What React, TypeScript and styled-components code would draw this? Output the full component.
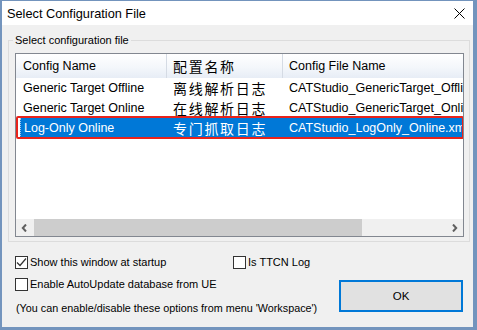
import styled, { createGlobalStyle } from 'styled-components';

const COLORS = {
  frame: '#7394bd',
  face: '#f0f0f0',
  groupLine: '#dcdcdc',
  listBorder: '#828790',
  headerLine: '#d5dbe4',
  select: '#0078d7',
  mark: '#e8231b',
  arrow: '#606060',
  thumb: '#cdcdcd',
};

const FONT = {
  ui: `'Liberation Sans', Arial, sans-serif`,
  cjk: `'Noto Sans CJK SC', sans-serif`,
};

type Config = { name: string; label: string; file: string; selected?: boolean };

const CONFIGS: Config[] = [
  { name: 'Generic Target Offline', label: '离线解析日志', file: 'CATStudio_GenericTarget_Offline.xml' },
  { name: 'Generic Target Online', label: '在线解析日志', file: 'CATStudio_GenericTarget_Online.xml' },
  { name: 'Log-Only Online', label: '专门抓取日志', file: 'CATStudio_LogOnly_Online.xml', selected: true },
];

// widths of the three list columns (row cells start after a 4px indent)
const COLS = [147, 116, 260];

const GlobalStyle = createGlobalStyle`
  html, body { margin: 0; padding: 0; background: ${COLORS.face}; }
  * { box-sizing: border-box; }
`;

const CheckMark = () => (
  <svg width='11' height='11' viewBox='0 0 11 11'>
    <polyline points='1,5.5 4,8.5 10,1.5' fill='none' stroke='#333' strokeWidth='1.2' />
  </svg>
);

const Chevron = ({ dir }: { dir: 'left' | 'right' }) => (
  <svg width='7' height='8' viewBox='0 0 7 8'>
    <polyline
      points={dir === 'left' ? '5,0.5 1.8,4 5,7.5' : '2,0.5 5.2,4 2,7.5'}
      fill='none'
      stroke={COLORS.arrow}
      strokeWidth='2'
    />
  </svg>
);

const CheckOption = ({ label, checked, area }: { label: string; checked?: boolean; area: string }) => (
  <Option $area={area}>
    <Box>{checked && <CheckMark />}</Box>
    {label}
  </Option>
);

const App = () => {
  return (
    <>
      <GlobalStyle />
      <Window>
        <TitleBar>
          <Title>Select Configuration File</Title>
          <svg width='11' height='11' viewBox='0 0 11 11'>
            <path d='M0.5 0.5 L10.5 10.5 M10.5 0.5 L0.5 10.5' stroke='#000' strokeWidth='1' />
          </svg>
        </TitleBar>
        <Group>
          <Legend>Select configuration file</Legend>
          <ListBox>
            <Viewport>
              <HeaderRow>
                <HeaderCell $w={151} $pad={7}>Config Name</HeaderCell>
                <HeaderCell $w={116} $pad={6} $cjk>
                  配置名称
                </HeaderCell>
                <HeaderCell $w={COLS[2]} $pad={6} $last>
                  Config File Name
                </HeaderCell>
              </HeaderRow>
              {CONFIGS.map((c) => (
                <Row key={c.name} $selected={!!c.selected}>
                  <Cell $w={COLS[0]} $pad={3} $selected={!!c.selected} $focus={!!c.selected}>
                    {c.name}
                  </Cell>
                  <Cell $w={COLS[1]} $pad={6} $selected={!!c.selected} $cjk>
                    {c.label}
                  </Cell>
                  <Cell $w={COLS[2]} $pad={6} $selected={!!c.selected}>
                    {c.file}
                  </Cell>
                </Row>
              ))}
            </Viewport>
            <HScroll>
              <ArrowButton>
                <Chevron dir='left' />
              </ArrowButton>
              <Track>
                <Thumb style={{ width: `${(447 / 560) * 100}%` }} />
              </Track>
              <ArrowButton>
                <Chevron dir='right' />
              </ArrowButton>
            </HScroll>
          </ListBox>
        </Group>
        <Footer>
          <CheckOption area='1 / 1 / 2 / 2' label='Show this window at startup' checked />
          <CheckOption area='1 / 2 / 2 / 4' label='Is TTCN Log' />
          <CheckOption area='2 / 1 / 3 / 3' label='Enable AutoUpdate database from UE' />
          <Note>(You can enable/disable these options from menu &apos;Workspace&apos;)</Note>
          <OkButton type='button'>OK</OkButton>
        </Footer>
      </Window>
    </>
  );
};

export default App;

const Window = styled.div`
  display: flex;
  flex-direction: column;
  width: 477px;
  height: 330px;
  border: solid ${COLORS.frame};
  border-width: 1px 4px 3px 2px;
  background: ${COLORS.face};
  font-family: ${FONT.ui};
  color: #000;
`;

const TitleBar = styled.div`
  display: flex;
  align-items: center;
  justify-content: space-between;
  height: 24px;
  padding: 0 8px 0 5px;
  background: #fff;
`;

const Title = styled.span`
  font-size: 12.75px;
`;

const Group = styled.fieldset`
  margin: 8px 3px 0 6px;
  padding: 6px 5px 4px 6px;
  min-width: 0;
  border: 1px solid ${COLORS.groupLine};
`;

const Legend = styled.legend`
  margin-left: -2px;
  padding: 0 2px;
  font-size: 11px;
  line-height: 14px;
`;

const ListBox = styled.div`
  display: flex;
  flex-direction: column;
  width: 449px;
  height: 184px;
  border: 1px solid ${COLORS.listBorder};
  background: #fff;
`;

const Viewport = styled.div`
  flex: 1;
  overflow: hidden;
`;

const HeaderRow = styled.div`
  display: flex;
  height: 24px;
  overflow: hidden;
  background: linear-gradient(to bottom, #ffffff, #f4f7fb 55%, #e7edf6);
`;

const cellFont = (cjk?: boolean) =>
  cjk
    ? `font-family: ${FONT.cjk}; font-size: 14px; letter-spacing: 1.7px;`
    : `font-family: ${FONT.ui}; font-size: 12.5px;`;

const HeaderCell = styled.div<{ $w: number; $pad: number; $cjk?: boolean; $last?: boolean }>`
  flex: none;
  display: flex;
  align-items: center;
  width: ${({ $w }) => $w}px;
  padding-left: ${({ $pad }) => $pad}px;
  border-right: ${({ $last }) => ($last ? 'none' : `1px solid ${COLORS.headerLine}`)};
  ${({ $cjk }) => cellFont($cjk)}
  white-space: nowrap;
`;

const Row = styled.div<{ $selected: boolean }>`
  position: relative;
  display: flex;
  height: 20px;
  padding-left: 4px;
  color: ${({ $selected }) => ($selected ? '#fff' : '#000')};

  /* red annotation frame drawn over the selected row */
  ${({ $selected }) =>
    $selected &&
    `
    &::after {
      content: '';
      position: absolute;
      top: -2px;
      bottom: -1px;
      left: 0;
      right: -1px;
      border: 2px solid ${COLORS.mark};
      border-radius: 2px;
    }
  `}
`;

const Cell = styled.div<{ $w: number; $pad: number; $selected: boolean; $cjk?: boolean; $focus?: boolean }>`
  flex: none;
  display: flex;
  align-items: center;
  width: ${({ $w }) => $w}px;
  padding-left: ${({ $pad }) => $pad}px;
  background: ${({ $selected }) => ($selected ? COLORS.select : 'transparent')};
  border-left: ${({ $focus }) => ($focus ? '1px dotted #9fc6ee' : 'none')};
  ${({ $cjk }) => cellFont($cjk)}
  white-space: nowrap;
  overflow: hidden;
`;

const HScroll = styled.div`
  display: flex;
  height: 17px;
  background: ${COLORS.face};
`;

const ArrowButton = styled.div`
  flex: none;
  display: flex;
  align-items: center;
  justify-content: center;
  width: 17px;
`;

const Track = styled.div`
  flex: 1;
  display: flex;
  padding: 0 1px;
`;

const Thumb = styled.div`
  background: ${COLORS.thumb};
`;

const Footer = styled.div`
  display: grid;
  grid-template-columns: 218px 106px 124px;
  grid-template-rows: 22px 22px 24px;
  margin: 9px 0 0 13px;
  font-size: 11px;
`;

const Option = styled.label<{ $area: string }>`
  grid-area: ${({ $area }) => $area};
  display: flex;
  align-items: center;
  gap: 2px;
`;

const Box = styled.span`
  display: flex;
  align-items: center;
  justify-content: center;
  width: 13px;
  height: 13px;
  border: 1px solid #333;
  background: #fff;
`;

const Note = styled.div`
  grid-area: 3 / 1 / 4 / 3;
  align-self: center;
  padding: 1px 0 0 1px;
  font-size: 10.8px;
  white-space: nowrap;
`;

const OkButton = styled.button`
  grid-area: 2 / 3 / 4 / 4;
  margin-top: 7px;
  height: 32px;
  border: 2px solid ${COLORS.select};
  background: #e1e1e1;
  font-family: ${FONT.ui};
  font-size: 11.5px;
  color: #000;
`;
